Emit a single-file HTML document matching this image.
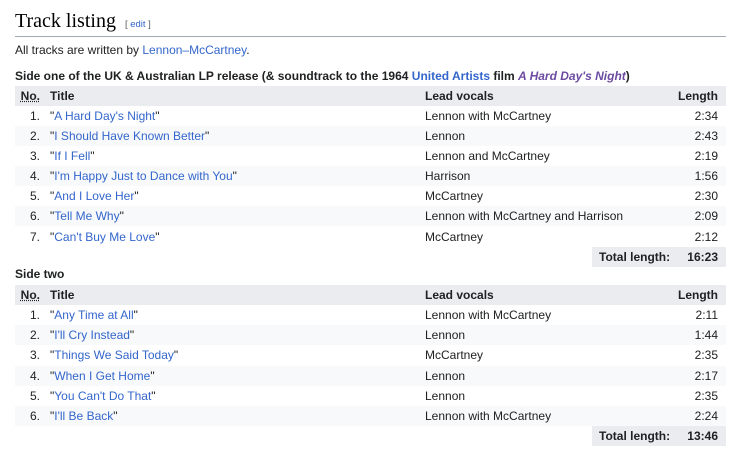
<!DOCTYPE html>
<html><head><style>
body{margin:0;background:#fff;font-family:"Liberation Sans",sans-serif;font-size:12px;color:#202122;}
a{color:#3366cc;text-decoration:none}
.h{position:absolute;left:15px;top:10px;width:711px;height:26px;border-bottom:1px solid #a2a9b1;}
.h span.t{font-family:"Liberation Serif",serif;font-size:20px;color:#000;}
.h span.e{font-size:9.5px;color:#54595d;margin-left:9px;}
.p{position:absolute;left:15px;top:43px;}
.cap{position:absolute;left:15px;font-weight:bold;}
.r{position:absolute;left:15px;width:711px;height:20px;line-height:20px;white-space:nowrap}
.r span{position:absolute;top:0}
.n{right:686px;text-align:right}
.t{left:35px}
.v{left:410px}
.l{right:8px}
.hd{background:#eaecf0;font-weight:bold}
.g{background:#f8f9fa}
.tot{position:absolute;left:592px;width:134px;height:20px;line-height:20px;background:#eaecf0;font-weight:bold}
</style></head><body>
<div class="h"><span class="t">Track listing</span><span class="e">[ <a>edit</a> ]</span></div>
<div class="p">All tracks are written by <a>Lennon–McCartney</a>.</div>
<div class="cap" style="top:69px">Side one of the UK &amp; Australian LP release (&amp; soundtrack to the 1964 <a>United Artists</a> film <a style="font-style:italic;color:#6b4ba1">A Hard Day's Night</a>)</div>
<div class="r hd" style="top:86px"><span class="n" style="text-decoration:underline dotted">No.</span><span class="t">Title</span><span class="v">Lead vocals</span><span class="l">Length</span></div>
<div class="r" style="top:106px"><span class="n">1.</span><span class="t">"<a>A Hard Day's Night</a>"</span><span class="v">Lennon with McCartney</span><span class="l">2:34</span></div>
<div class="r g" style="top:126px"><span class="n">2.</span><span class="t">"<a>I Should Have Known Better</a>"</span><span class="v">Lennon</span><span class="l">2:43</span></div>
<div class="r" style="top:146px"><span class="n">3.</span><span class="t">"<a>If I Fell</a>"</span><span class="v">Lennon and McCartney</span><span class="l">2:19</span></div>
<div class="r g" style="top:166px"><span class="n">4.</span><span class="t">"<a>I'm Happy Just to Dance with You</a>"</span><span class="v">Harrison</span><span class="l">1:56</span></div>
<div class="r" style="top:186px"><span class="n">5.</span><span class="t">"<a>And I Love Her</a>"</span><span class="v">McCartney</span><span class="l">2:30</span></div>
<div class="r g" style="top:206px"><span class="n">6.</span><span class="t">"<a>Tell Me Why</a>"</span><span class="v">Lennon with McCartney and Harrison</span><span class="l">2:09</span></div>
<div class="r" style="top:227px"><span class="n">7.</span><span class="t">"<a>Can't Buy Me Love</a>"</span><span class="v">McCartney</span><span class="l">2:12</span></div>
<div class="tot" style="top:247px"><span style="position:absolute;left:7px">Total length:</span><span style="position:absolute;right:8px">16:23</span></div>
<div class="cap" style="top:267px">Side two</div>
<div class="r hd" style="top:285px"><span class="n" style="text-decoration:underline dotted">No.</span><span class="t">Title</span><span class="v">Lead vocals</span><span class="l">Length</span></div>
<div class="r" style="top:305px"><span class="n">1.</span><span class="t">"<a>Any Time at All</a>"</span><span class="v">Lennon with McCartney</span><span class="l">2:11</span></div>
<div class="r g" style="top:325px"><span class="n">2.</span><span class="t">"<a>I'll Cry Instead</a>"</span><span class="v">Lennon</span><span class="l">1:44</span></div>
<div class="r" style="top:345px"><span class="n">3.</span><span class="t">"<a>Things We Said Today</a>"</span><span class="v">McCartney</span><span class="l">2:35</span></div>
<div class="r g" style="top:366px"><span class="n">4.</span><span class="t">"<a>When I Get Home</a>"</span><span class="v">Lennon</span><span class="l">2:17</span></div>
<div class="r" style="top:386px"><span class="n">5.</span><span class="t">"<a>You Can't Do That</a>"</span><span class="v">Lennon</span><span class="l">2:35</span></div>
<div class="r g" style="top:406px"><span class="n">6.</span><span class="t">"<a>I'll Be Back</a>"</span><span class="v">Lennon with McCartney</span><span class="l">2:24</span></div>
<div class="tot" style="top:426px"><span style="position:absolute;left:7px">Total length:</span><span style="position:absolute;right:8px">13:46</span></div>
</body></html>
